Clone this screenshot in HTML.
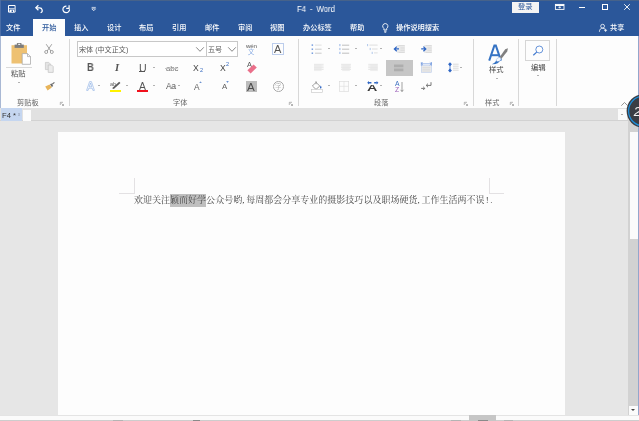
<!DOCTYPE html>
<html lang="zh-CN">
<head>
<meta charset="utf-8">
<title>F4 - Word</title>
<style>
*{margin:0;padding:0;box-sizing:border-box}
html,body{width:639px;height:421px;overflow:hidden;background:#e6e6e6}
body{position:relative;font-family:"Liberation Sans","Noto Sans CJK SC",sans-serif;font-size:7.5px;color:#444;-webkit-font-smoothing:antialiased}
.abs,.abs *{position:absolute}
.t{position:absolute;white-space:nowrap;line-height:10px;height:10px;will-change:transform}
#title{left:0;top:0;width:639px;height:35.5px;background:#2b579a}
#topline{left:0;top:0;width:639px;height:1px;background:#46628a}
.tab{color:#fff;top:22.5px;font-size:7.2px;font-weight:500}
#acttab{left:33px;top:19px;width:32px;height:18px;background:#fdfdfd}
#ribbon{left:0;top:35.5px;width:639px;height:72.5px;background:#fdfdfd;border-left:1px solid #a9b8d4}
.sep{width:1px;top:39px;height:67px;background:#d8d8d8}
.lbl{top:97.5px;font-size:7.2px;color:#666}
.dd{width:0;height:0;border-left:1.8px solid transparent;border-right:1.8px solid transparent;border-top:1.9px solid #686868;margin-left:-0.1px}
svg{position:absolute;overflow:visible}
#tabbar{left:0;top:108px;width:639px;height:13px;background:#e1e1e1;border-bottom:1px solid #d2d2d2}
#page{left:58px;top:132px;width:507px;height:282.5px;background:#fdfdfd}
#doc{left:134px;top:193px;font-family:"Liberation Serif","Noto Serif CJK SC",serif;font-size:9.03px;font-weight:400;color:#484848;line-height:14px;height:14px;white-space:nowrap;letter-spacing:0}
#doc{will-change:transform}
#doc span{position:static;display:inline-block;width:4px;text-align:left}
#sel{left:170.4px;top:194px;width:36px;height:12.7px;background:#bfbfbf}
#status{left:0;top:415px;width:639px;height:6px;background:#fbfbfb;border-top:1px solid #e4e4e4;border-bottom:1px solid #cdcdcd}
#scroll{left:628px;top:121px;width:10px;height:294px;background:#d2d2d2}
</style>
</head>
<body>
<div class="abs" id="title"></div>
<div class="abs" id="topline"></div>
<div class="abs" style="left:0;top:0;width:1px;height:36px;background:#4a6da6"></div>
<!-- title text -->
<div class="t" style="left:297px;top:3.6px;color:#fff;font-size:8.4px;word-spacing:2px;transform:scaleX(0.92);transform-origin:0 0">F4 - Word</div>
<!-- quick access icons -->
<svg style="left:7.6px;top:5.1px" width="8" height="8" viewBox="0 0 8 8"><path d="M0.5 0.5h6.6v6.6h-6.6z" fill="none" stroke="#fff" stroke-width="1"/><path d="M1 3.6h5.6" stroke="#fff" stroke-width="0.7"/><rect x="1.6" y="4.6" width="4.4" height="2.6" fill="#fff"/><rect x="3.6" y="5.4" width="1.4" height="1.6" fill="#2b579a"/></svg>
<svg style="left:35px;top:4.8px" width="9" height="9" viewBox="0 0 9 9"><path d="M1 2.8h3.4a2.6 2.6 0 0 1 1.2 5" fill="none" stroke="#fff" stroke-width="1.2"/><path d="M3.4 0.3L0.8 2.8l2.6 2.5" fill="none" stroke="#fff" stroke-width="1.2"/></svg>
<svg style="left:62.4px;top:4.8px" width="9" height="9" viewBox="0 0 9 9"><path d="M4.4 1.1A3.3 3.3 0 1 0 7.5 4.2" fill="none" stroke="#fff" stroke-width="1.2"/><path d="M4.2 3.3h2.9V0.2" fill="none" stroke="#fff" stroke-width="1.2"/></svg>
<svg style="left:90.5px;top:7px" width="6" height="5" viewBox="0 0 6 5"><path d="M0.6 0.4h4.2M0.8 1.8l1.9 2 1.9-2z" fill="none" stroke="#fff" stroke-width="0.7"/></svg>
<!-- login -->
<div class="abs" style="left:512px;top:1.5px;width:26.5px;height:11px;background:#f4f4f4"></div>
<div class="t" style="left:518px;top:1.8px;color:#2b579a;font-size:7.3px">登录</div>
<!-- window controls -->
<svg style="left:554.5px;top:4px" width="10" height="6" viewBox="0 0 10 6"><rect x="0.4" y="0.4" width="8.6" height="5" fill="none" stroke="#fff" stroke-width="0.9"/><rect x="0.4" y="0.4" width="8.6" height="1.6" fill="#fff"/><path d="M3.4 3.3h2.6M4.7 2.4v2" stroke="#fff" stroke-width="0.8"/></svg>
<div class="abs" style="left:578.5px;top:7.2px;width:6.5px;height:1px;background:#fff"></div>
<div class="abs" style="left:601.5px;top:4px;width:6.5px;height:6px;border:1px solid #fff"></div>
<svg style="left:624px;top:4px" width="6" height="6" viewBox="0 0 6 6"><path d="M0.2 0.2l5.6 5.6M5.8 0.2L0.2 5.8" stroke="#fff" stroke-width="0.9"/></svg>
<!-- tabs -->
<div class="abs" id="acttab"></div>
<div class="t tab" style="left:6px">文件</div>
<div class="t tab" style="left:41.8px;color:#2b579a">开始</div>
<div class="t tab" style="left:74.3px">插入</div>
<div class="t tab" style="left:106.8px">设计</div>
<div class="t tab" style="left:139.4px">布局</div>
<div class="t tab" style="left:172px">引用</div>
<div class="t tab" style="left:204.5px">邮件</div>
<div class="t tab" style="left:237.5px">审阅</div>
<div class="t tab" style="left:270px">视图</div>
<div class="t tab" style="left:302.6px">办公标签</div>
<div class="t tab" style="left:349.6px">帮助</div>
<svg style="left:382.2px;top:23px" width="6.6" height="9.9" viewBox="0 0 6 9"><path d="M3 0.5a2.4 2.4 0 0 1 1.3 4.4v1.4h-2.6v-1.4A2.4 2.4 0 0 1 3 0.5zM1.9 7.4h2.2M2.2 8.4h1.6" fill="none" stroke="#fff" stroke-width="0.8"/></svg>
<div class="t tab" style="left:396px">操作说明搜索</div>
<svg style="left:599px;top:24px" width="9" height="8" viewBox="0 0 9 8"><circle cx="3.6" cy="2.2" r="1.9" fill="none" stroke="#fff" stroke-width="0.8"/><path d="M0.4 7.8c0-2.4 1.4-3.6 3.2-3.6 1 0 1.8 0.4 2.4 1" fill="none" stroke="#fff" stroke-width="0.8"/><path d="M6.6 4.8v3M5.1 6.3h3" stroke="#fff" stroke-width="0.8"/></svg>
<div class="t tab" style="left:609.8px">共享</div>

<!-- RIBBON -->
<div class="abs" id="ribbon"></div>
<!-- Clipboard group -->
<svg style="left:10.5px;top:43px" width="21" height="22" viewBox="0 0 21 22">
<rect x="0.5" y="2.2" width="15.5" height="18.3" fill="#eec172"/>
<rect x="3.6" y="1.6" width="9.2" height="3.3" fill="#7d7d7d"/><rect x="5.8" y="0" width="4.8" height="2.4" rx="0.8" fill="#7d7d7d"/><rect x="7.2" y="0.8" width="2" height="1.1" fill="#fdfdfd"/>
<path d="M11.2 10.6h5.3l3 3v7.7h-8.3z" fill="#fff" stroke="#a0a0a0" stroke-width="0.7"/><path d="M16.5 10.6v3h3" fill="none" stroke="#a0a0a0" stroke-width="0.7"/>
</svg>
<div class="abs" style="left:5.5px;top:67.3px;width:26px;height:1px;background:#dadada"></div>
<div class="t" style="left:11.4px;top:68.8px;font-size:7.3px;color:#505050">粘贴</div>
<div class="abs dd" style="left:17.9px;top:81.6px"></div>
<!-- scissors -->
<svg style="left:44.2px;top:44px" width="10" height="10" viewBox="0 0 10 10"><path d="M2.2 0.2L6.8 7M7.8 0.2L3.2 7" stroke="#8c8c8c" stroke-width="0.8" fill="none"/><circle cx="2.2" cy="8" r="1.5" fill="none" stroke="#8c8c8c" stroke-width="0.8"/><circle cx="7.8" cy="8" r="1.5" fill="none" stroke="#8c8c8c" stroke-width="0.8"/></svg>
<!-- copy -->
<svg style="left:45.4px;top:62.4px" width="9" height="11" viewBox="0 0 9 11"><path d="M0.4 0.4h3.4l1.6 1.6v5.6h-5z" fill="#e4e4e4" stroke="#c6c6c6" stroke-width="0.7"/><path d="M3.2 3h3.4l1.6 1.6v5.8h-5z" fill="#ececec" stroke="#c2c2c2" stroke-width="0.7"/></svg>
<!-- format painter -->
<svg style="left:44.8px;top:82.4px" width="10" height="9" viewBox="0 0 10 9"><path d="M0.2 4.6L4.6 2.4 6.8 5.6 2.6 8.4z" fill="#e8b45a"/><path d="M5 2.2L6.6 1.4 8.2 4 6.8 5z" fill="#6a6a6a"/><path d="M7.2 2.2L9.4 0.4" stroke="#6a6a6a" stroke-width="1.1"/></svg>
<div class="t lbl" style="left:17px">剪贴板</div>
<svg class="ln" style="left:60.3px;top:102px" width="4" height="4" viewBox="0 0 4 4"><path d="M0.3 3V0.3H3" fill="none" stroke="#888" stroke-width="0.6"/><path d="M1.4 1.4L3.4 3.4M3.5 2v1.5H2" fill="none" stroke="#888" stroke-width="0.6"/></svg>
<div class="abs sep" style="left:69px"></div>

<!-- Font group -->
<div class="abs" style="left:77px;top:41px;width:129.5px;height:16px;background:#fff;border:1px solid #c8c8c8"></div>
<div class="abs" style="left:205.5px;top:41px;width:32px;height:16px;background:#fff;border:1px solid #c8c8c8"></div>
<div class="t" style="left:79px;top:44.6px;font-size:7.1px;color:#5a5a5a">宋体 (中文正文)</div>
<div class="t" style="left:208px;top:44.6px;font-size:7.1px;color:#5a5a5a">五号</div>
<svg style="left:196px;top:47.2px" width="8" height="5" viewBox="0 0 8 5"><path d="M0.2 0.3L4 4.3 7.8 0.3" fill="none" stroke="#555" stroke-width="0.7"/></svg>
<svg style="left:227.5px;top:47.2px" width="8" height="5" viewBox="0 0 8 5"><path d="M0.2 0.3L4 4.3 7.8 0.3" fill="none" stroke="#555" stroke-width="0.7"/></svg>
<!-- wen -->
<div class="t" style="left:246px;top:41px;font-size:6.2px;color:#5a5a5a;letter-spacing:-0.2px">wén</div>
<div class="t" style="left:248px;top:47.2px;font-size:6.4px;color:#4a7fd4;font-weight:300">文</div>
<!-- char border A -->
<div class="abs" style="left:272.2px;top:43.4px;width:11.5px;height:11.5px;border:0.8px solid #bccdec;background:#fdfdfd"></div>
<div class="t" style="left:274.4px;top:44.2px;font-size:11px;color:#555">A</div>
<!-- row 2 -->
<div class="t" style="left:86.6px;top:63.2px;font-size:10px;font-weight:bold;color:#555;transform:scaleX(0.93);transform-origin:0 0">B</div>
<div class="t" style="left:114.6px;top:62.6px;font-size:10.6px;font-style:italic;font-weight:bold;font-family:'Liberation Serif',serif;color:#555">I</div>
<div class="t" style="left:138.6px;top:62.6px;font-size:10.6px;color:#555;transform:scaleX(0.95);transform-origin:0 0">U</div>
<div class="abs" style="left:138.8px;top:71.2px;width:6.4px;height:0.7px;background:#555"></div>
<div class="abs dd" style="left:152.7px;top:67px"></div>
<div class="t" style="left:165.5px;top:64.4px;font-size:7.9px;color:#707070;letter-spacing:-0.2px">abc</div>
<div class="abs" style="left:165px;top:68px;width:12px;height:1px;background:#c4c4c4"></div>
<div class="t" style="left:193.4px;top:63.4px;font-size:8.6px;color:#444">X</div>
<div class="t" style="left:199.6px;top:65.4px;font-size:5.6px;color:#3a6dc0">2</div>
<div class="t" style="left:220.2px;top:63.4px;font-size:8.6px;color:#444">X</div>
<div class="t" style="left:226.4px;top:59.2px;font-size:5.6px;color:#3a6dc0">2</div>
<!-- clear formatting -->
<div class="t" style="left:246.6px;top:59.8px;font-size:7.4px;color:#555">A</div>
<svg style="left:247.4px;top:63.8px" width="10" height="10" viewBox="0 0 10 10"><path d="M0.4 6.2L6.6 0.4 9.8 3.6 3.6 9.6z" fill="#ea6f8a"/></svg>
<!-- row 3 -->
<svg style="left:86px;top:80.6px" width="9" height="10" viewBox="0 0 9 10"><path d="M0.6 9.4L3.6 0.6h1.8l3 8.8H6.9L6.2 7.2H2.8L2.1 9.4zM3.2 5.8h2.6L4.5 1.9z" fill="#fff" stroke="#7aa3e0" stroke-width="0.55"/></svg>
<div class="abs dd" style="left:97.7px;top:85.4px"></div>
<div class="t" style="left:109.6px;top:78.6px;font-size:5.6px;color:#666">ab</div>
<svg style="left:112px;top:81px" width="10" height="8" viewBox="0 0 10 8"><path d="M1.2 7.4L7.8 1.4" stroke="#5a5a5a" stroke-width="1.9"/><path d="M0.4 8l1.6-0.4-1-1z" fill="#5a5a5a"/></svg>
<div class="abs" style="left:109.8px;top:89.9px;width:11.3px;height:2.2px;background:#fff200"></div>
<div class="abs dd" style="left:125.7px;top:85.4px"></div>
<div class="t" style="left:138.6px;top:81.6px;font-size:10.4px;color:#555">A</div>
<div class="abs" style="left:136.5px;top:89.9px;width:11.6px;height:2.2px;background:#f0111c"></div>
<div class="abs dd" style="left:152.7px;top:85.4px"></div>
<div class="t" style="left:166px;top:81.4px;font-size:9.2px;color:#555;letter-spacing:-0.2px;transform:scaleX(0.9);transform-origin:0 0">Aa</div>
<div class="abs dd" style="left:178.4px;top:85.4px"></div>
<div class="t" style="left:194.4px;top:82.4px;font-size:8.4px;color:#606060">A</div>
<svg style="left:199px;top:81.2px" width="3" height="2" viewBox="0 0 3 2"><path d="M0.2 1.8L1.5 0.4 2.8 1.8z" fill="#3a6dc0"/></svg>
<div class="t" style="left:221.8px;top:82.4px;font-size:7.8px;color:#606060">A</div>
<svg style="left:226px;top:81.2px" width="3" height="2" viewBox="0 0 3 2"><path d="M0.2 0.3L1.5 1.7 2.8 0.3z" fill="#3a6dc0"/></svg>
<div class="abs" style="left:246.2px;top:81.3px;width:10.6px;height:10.6px;background:#bcbcbc"></div>
<div class="t" style="left:247.4px;top:81.8px;font-size:11.6px;color:#4c4c4c">A</div>
<div class="abs" style="left:273px;top:81.2px;width:10.7px;height:10.7px;border:0.7px solid #a8a8a8;border-radius:50%"></div>
<div class="t" style="left:275.2px;top:81.5px;font-size:6.4px;color:#888;font-weight:300">字</div>
<div class="t lbl" style="left:172.5px">字体</div>
<svg style="left:289.4px;top:102px" width="4" height="4" viewBox="0 0 4 4"><path d="M0.3 3V0.3H3" fill="none" stroke="#888" stroke-width="0.6"/><path d="M1.4 1.4L3.4 3.4M3.5 2v1.5H2" fill="none" stroke="#888" stroke-width="0.6"/></svg>
<div class="abs sep" style="left:298px"></div>
<!-- Paragraph group -->
<!-- bullets -->
<svg style="left:311.4px;top:44px" width="12" height="10" viewBox="0 0 12 10"><g fill="#6c96dc"><rect x="0.6" y="0.4" width="1.5" height="1.4"/><rect x="0.6" y="4.5" width="1.5" height="1.4"/><rect x="0.6" y="8.5" width="1.5" height="1.4"/></g><path d="M4 1.1h6.6" stroke="#c8c8c8" stroke-width="0.55"/><path d="M4 5.2h6.6M4 9.2h6.6" stroke="#a2a2a2" stroke-width="0.55"/></svg>
<div class="abs dd" style="left:327.6px;top:48px"></div>
<!-- numbering -->
<svg style="left:338.7px;top:44px" width="12" height="10" viewBox="0 0 12 10"><path d="M0.9 0v2.2M0.9 3.9v2.2M0.9 7.8v2.2" stroke="#6c96dc" stroke-width="0.7"/><path d="M3 1.2h7.2M3 5.2h7.2M3 9.2h7.2" stroke="#8c8c8c" stroke-width="0.55"/></svg>
<div class="abs dd" style="left:354.6px;top:48px"></div>
<!-- multilevel -->
<svg style="left:366.8px;top:44px" width="12" height="10" viewBox="0 0 12 10"><path d="M0.6 0v2.2M3.2 3.9v2.2M5.2 7.8v2.2" stroke="#8fb0e4" stroke-width="0.7"/><path d="M2.4 1.1h8.2M5 5h5.6M7 8.9h3.6" stroke="#cacaca" stroke-width="0.6"/></svg>
<div class="abs dd" style="left:380px;top:48px"></div>
<!-- decrease indent -->
<svg style="left:394px;top:45px" width="11" height="8" viewBox="0 0 11 8"><rect x="3" y="0" width="8" height="8" fill="#ececec"/><path d="M4.6 0.6h6M6.4 3h4.2M6.4 5.2h4.2M4.6 7.4h6" stroke="#d2d2d2" stroke-width="0.7"/><path d="M5 3.9H1M2.8 1.6L0.4 3.9l2.4 2.3" fill="none" stroke="#2f66c4" stroke-width="1.3"/></svg>
<!-- increase indent -->
<svg style="left:420.8px;top:45px" width="11" height="8" viewBox="0 0 11 8"><rect x="3" y="0" width="8" height="8" fill="#ececec"/><path d="M4.6 0.6h6M6.4 3h4.2M6.4 5.2h4.2M4.6 7.4h6" stroke="#d2d2d2" stroke-width="0.7"/><path d="M0.2 3.9h4M2.4 1.6l2.4 2.3-2.4 2.3" fill="none" stroke="#2f66c4" stroke-width="1.3"/></svg>
<!-- align row -->
<svg style="left:314px;top:64px" width="10" height="7" viewBox="0 0 10 7"><path d="M0 0.3h9.6M0 2h9.6M0 3.7h9.6M0 5.4h9.6" stroke="#d6d6d6" stroke-width="0.6"/><path d="M0 1.15h7.6M0 2.85h7.6M0 4.55h7.6M0 6.6h7.6" stroke="#e2e2e2" stroke-width="0.6"/></svg>
<svg style="left:340.8px;top:64px" width="10" height="7" viewBox="0 0 10 7"><path d="M0 0.3h10M0 2h10M0 3.7h10M0 5.4h10" stroke="#d6d6d6" stroke-width="0.6"/><path d="M1.2 1.15h7.6M1.2 2.85h7.6M1.2 4.55h7.6M1.2 6.6h7.6" stroke="#e0e0e0" stroke-width="0.6"/></svg>
<svg style="left:367.6px;top:64px" width="10" height="7" viewBox="0 0 10 7"><path d="M0.2 0.3h9.6M0.2 2h9.6M0.2 3.7h9.6M0.2 5.4h9.6" stroke="#d6d6d6" stroke-width="0.6"/><path d="M2.2 1.15h7.6M2.2 2.85h7.6M2.2 4.55h7.6M2.2 6.6h7.6" stroke="#e0e0e0" stroke-width="0.6"/></svg>
<div class="abs" style="left:386.2px;top:59.7px;width:26.8px;height:16.3px;background:#c6c6c6"></div>
<svg style="left:394.4px;top:64px" width="10" height="7" viewBox="0 0 10 7"><path d="M0 1.9h9.4M0 5.8h9.4" stroke="#adadad" stroke-width="2.8"/></svg>
<!-- distributed -->
<svg style="left:421.3px;top:62.4px" width="11" height="11" viewBox="0 0 11 11"><rect x="0.3" y="3.6" width="10.2" height="6.8" fill="#ebebeb" stroke="#b9cbea" stroke-width="0.6"/><path d="M1.4 5.4h8M1.4 7.2h8M1.4 9h8" stroke="#d0d0d0" stroke-width="0.6"/><path d="M0.4 1.8h10M2 0.4L0.5 1.8 2 3.2M8.8 0.4l1.5 1.4-1.5 1.4" fill="none" stroke="#5585d6" stroke-width="0.6"/><path d="M0.3 0v3.6M10.5 0v3.6" stroke="#5585d6" stroke-width="0.6"/></svg>
<!-- line spacing -->
<svg style="left:447.7px;top:62.4px" width="11" height="11" viewBox="0 0 11 11"><path d="M2 0.2L0.1 2.2 2 4.2 3.9 2.2zM2 10.6L0.1 8.6 2 6.6 3.9 8.6z" fill="#2f66c4"/><path d="M2 2v6.6" stroke="#2f66c4" stroke-width="0.8"/><path d="M5 2.2h5.6M5 4.2h5.6M5 6.2h5.6M5 8.2h5.6" stroke="#c4c4c4" stroke-width="0.6"/></svg>
<div class="abs dd" style="left:460.3px;top:66.6px"></div>
<!-- shading bucket -->
<svg style="left:311.2px;top:81.2px" width="12" height="12" viewBox="0 0 12 12"><path d="M5 1.4L1.4 5l3.6 3.4L8.8 5z" fill="#fff" stroke="#777" stroke-width="0.7"/><path d="M5 0.2v3" stroke="#777" stroke-width="0.7"/><path d="M9.6 4.6c0.9 1.2 1.2 1.9 0.6 2.6-0.6 0.5-1.3 0-1.2-0.8z" fill="#2f66c4"/><rect x="0.3" y="8.6" width="11" height="2.8" fill="#fff" stroke="#c4c4c4" stroke-width="0.6"/></svg>
<div class="abs dd" style="left:327.6px;top:85.4px"></div>
<!-- borders -->
<svg style="left:339px;top:81.3px" width="10" height="11" viewBox="0 0 10 11"><rect x="0.3" y="0.3" width="9.4" height="10" fill="#fcfcfc" stroke="#d8d8d8" stroke-width="0.6"/><path d="M5 0.3v10M0.3 5.3h9.4" stroke="#dcdcdc" stroke-width="0.6"/></svg>
<div class="abs dd" style="left:354.6px;top:85.4px"></div>
<!-- text width A -->
<div class="t" style="left:367.2px;top:83.6px;font-size:8.2px;color:#3a3a3a;font-weight:bold;transform:scaleX(1.75);transform-origin:0 0">A</div>
<svg style="left:366.8px;top:81.2px" width="12" height="4" viewBox="0 0 12 4"><path d="M0.2 1.7L2 0v3.4zM11.4 1.7L9.6 0v3.4z" fill="#2f66c4"/><path d="M1.8 1.7h2.6M7.2 1.7h2.6" stroke="#2f66c4" stroke-width="1.5"/></svg>
<div class="abs dd" style="left:380px;top:85.4px"></div>
<!-- sort -->
<div class="t" style="left:395px;top:79.2px;font-size:6.8px;color:#3a6dc0">A</div>
<div class="t" style="left:395.2px;top:84.6px;font-size:6.8px;color:#9a5fb8">Z</div>
<svg style="left:400.4px;top:82px" width="4" height="10" viewBox="0 0 4 10"><path d="M2 0v9.4M0.6 7.8L2 9.6 3.4 7.8" fill="none" stroke="#666" stroke-width="0.6"/></svg>
<!-- show marks -->
<svg style="left:421.3px;top:82px" width="11" height="9" viewBox="0 0 11 9"><path d="M10 0.2v3.2H5.4M7 1.6L5.2 3.4 7 5.2" fill="none" stroke="#666" stroke-width="0.9"/><path d="M0.2 6.4h3.4M2.2 4.8l1.6 1.6-1.6 1.6" fill="none" stroke="#666" stroke-width="0.9"/></svg>
<div class="t lbl" style="left:373.8px">段落</div>
<svg style="left:464.4px;top:102px" width="4" height="4" viewBox="0 0 4 4"><path d="M0.3 3V0.3H3" fill="none" stroke="#888" stroke-width="0.6"/><path d="M1.4 1.4L3.4 3.4M3.5 2v1.5H2" fill="none" stroke="#888" stroke-width="0.6"/></svg>
<div class="abs sep" style="left:472.5px"></div>

<!-- Styles group -->
<svg style="left:488.4px;top:44.4px" width="21" height="21" viewBox="0 0 21 21"><path d="M1.2 16.6L6.4 1.5h1.4L13 16.6" fill="none" stroke="#3573c4" stroke-width="2.05" stroke-linejoin="miter"/><path d="M3.4 11.2h7.4" stroke="#3573c4" stroke-width="2"/><path d="M20 4.2L17.2 5.2 11.4 13.6l1.8 1.4 6-7.6z" fill="#808080"/><ellipse cx="10.6" cy="15.6" rx="2.6" ry="1.8" transform="rotate(-38 10.6 15.6)" fill="#f6f9fd" stroke="#8fb2e4" stroke-width="0.5"/><path d="M8.2 16.4c0.8 1.6 2.6 1.4 3.6 0.4-0.6 2.2-3.6 3.8-8 3.4 2.2-0.8 3.4-2.2 4.4-3.8z" fill="#3573c4"/></svg>
<div class="t" style="left:489.3px;top:65.3px;font-size:7.3px;color:#444">样式</div>
<div class="abs dd" style="left:495.9px;top:77.6px"></div>
<div class="t lbl" style="left:484.7px">样式</div>
<svg style="left:509.8px;top:102px" width="4" height="4" viewBox="0 0 4 4"><path d="M0.3 3V0.3H3" fill="none" stroke="#888" stroke-width="0.6"/><path d="M1.4 1.4L3.4 3.4M3.5 2v1.5H2" fill="none" stroke="#888" stroke-width="0.6"/></svg>
<div class="abs sep" style="left:518px"></div>

<!-- Editing group -->
<div class="abs" style="left:525px;top:40px;width:25px;height:20.5px;border:1px solid #d6d6d6;background:#fdfdfd"></div>
<svg style="left:532.6px;top:45.6px" width="10" height="10" viewBox="0 0 10 10"><circle cx="6.3" cy="3.5" r="3.5" fill="#fff" stroke="#4079cf" stroke-width="0.8"/><path d="M3.7 6.1L0.3 9.3" stroke="#4079cf" stroke-width="1.2"/></svg>
<div class="t" style="left:530.9px;top:62.6px;font-size:7.3px;color:#444">编辑</div>
<div class="abs dd" style="left:537.2px;top:74.9px"></div>
<div class="abs sep" style="left:555.5px"></div>
<!-- collapse -->
<svg style="left:621px;top:102.2px" width="7" height="4" viewBox="0 0 7 4"><path d="M0.3 3.7L3.5 0.5 6.7 3.7" fill="none" stroke="#666" stroke-width="0.7"/></svg>


<!-- doc tab bar -->
<div class="abs" id="tabbar"></div>
<div class="abs" style="left:1px;top:108px;width:21px;height:12.5px;background:#c5d6f0"></div>
<div class="t" style="left:1.6px;top:110.6px;font-size:7.6px;color:#333">F4 *</div><div class="t" style="left:18px;top:110.4px;font-size:4.5px;color:#8a93a8">x</div>
<div class="abs" style="left:23px;top:110px;width:7.5px;height:10.5px;background:#fcfcfc"></div>
<div class="abs" style="left:617.8px;top:108.6px;width:9px;height:11.6px;background:#fafafa"></div>
<div class="abs dd" style="left:620.8px;top:113.6px;border-top-color:#555"></div>

<!-- page -->
<div class="abs" id="page"></div>
<div class="abs" id="sel"></div>
<div class="abs" id="doc">欢迎关注颖而好学公众号哟<span style="font-weight:500;color:#333">,</span>每周都会分享专业的摄影技巧以及职场硬货<span style="font-weight:500;color:#333">,</span>工作生活两不误<span style="padding-left:1.2px;width:4.5px">!</span><span style="color:#555;font-weight:500;padding-left:1.2px">.</span></div>
<!-- crop marks -->
<div class="abs" style="left:119px;top:178px;width:15.5px;height:15.5px;border-right:1px solid #e3e1e3;border-bottom:1px solid #e3e1e3"></div>
<div class="abs" style="left:488.5px;top:178px;width:15.5px;height:15.5px;border-left:1px solid #e3e1e3;border-bottom:1px solid #e3e1e3"></div>

<!-- scrollbar -->
<div class="abs" id="scroll"></div>
<div class="abs" style="left:629.5px;top:131.5px;width:8px;height:107.5px;background:#fbfbfb"></div>
<div class="abs" style="left:629px;top:406px;width:8.5px;height:8.5px;background:#fbfbfb"></div>
<div class="abs" style="left:631px;top:409px;width:0;height:0;border-left:2.2px solid transparent;border-right:2.2px solid transparent;border-top:2.6px solid #444"></div>
<div class="abs" style="left:638px;top:36px;width:1px;height:385px;background:#93a6cc"></div>

<!-- status -->
<div class="abs" id="status"></div>
<div class="abs" style="left:469.2px;top:415.3px;width:26.5px;height:5.7px;background:#c6c6c6"></div>
<div class="abs" style="left:477.5px;top:420px;width:10.5px;height:1px;background:#8a8a8a"></div>
<div class="abs" style="left:192.5px;top:420px;width:7.5px;height:1px;background:#8a8a8a"></div>
<div class="abs" style="left:113px;top:420px;width:10px;height:1px;background:#b4b4b4"></div>
<div class="abs" style="left:451px;top:420px;width:9.5px;height:1px;background:#b4b4b4"></div>
<div class="abs" style="left:504px;top:420px;width:8.5px;height:1px;background:#b4b4b4"></div>

<!-- badge -->
<svg style="left:619px;top:91px" width="20" height="40" viewBox="0 0 20 40"><circle cx="24.4" cy="20" r="16.8" fill="#3a3d44"/><circle cx="24.4" cy="20" r="14.8" fill="none" stroke="#1c8fdc" stroke-width="1.2"/><text x="14.8" y="24.7" font-family="Liberation Sans, sans-serif" font-size="13" font-style="italic" fill="#f4f4f4">2</text></svg>
</body>
</html>
